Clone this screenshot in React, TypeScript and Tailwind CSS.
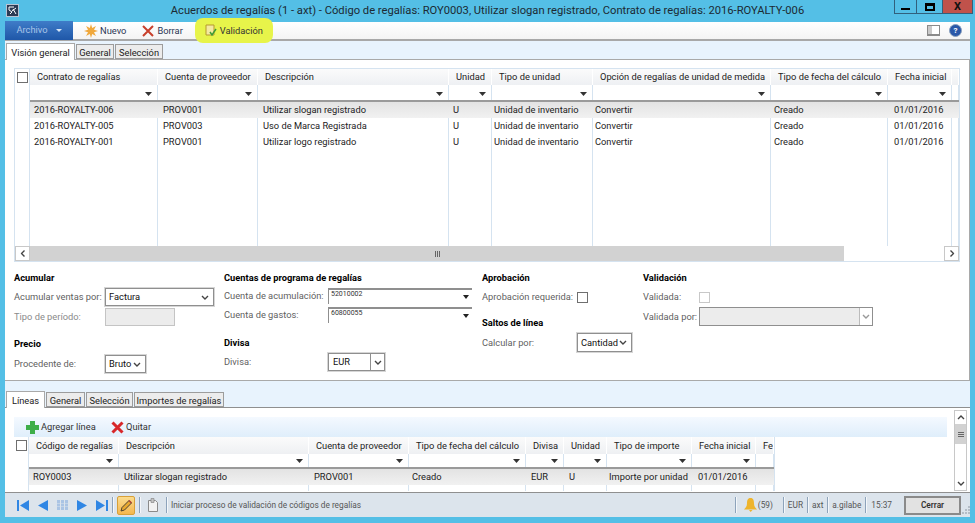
import React from 'react';

type Col = { label: string; w: string; pl: string; vp: string };

const topCols: Col[] = [
  { label: 'Contrato de regalías', w: 'w-[128px]', pl: 'pl-[7px]', vp: 'pl-[4px]' },
  { label: 'Cuenta de proveedor', w: 'w-[100px]', pl: 'pl-[7px]', vp: 'pl-[5px]' },
  { label: 'Descripción', w: 'w-[191px]', pl: 'pl-[7px]', vp: 'pl-[5px]' },
  { label: 'Unidad', w: 'w-[43px]', pl: 'pl-[7px]', vp: 'pl-[4px]' },
  { label: 'Tipo de unidad', w: 'w-[101px]', pl: 'pl-[7px]', vp: 'pl-[2px]' },
  { label: 'Opción de regalías de unidad de medida', w: 'w-[178px]', pl: 'pl-[7px]', vp: 'pl-[2px]' },
  { label: 'Tipo de fecha del cálculo', w: 'w-[117px]', pl: 'pl-[7px]', vp: 'pl-[3px]' },
  { label: 'Fecha inicial', w: 'w-[64px]', pl: 'pl-[7px]', vp: 'pl-[6px]' },
  { label: '', w: 'w-[7px]', pl: 'pl-0', vp: 'pl-0' },
];

const topRows = [
  ['2016-ROYALTY-006', 'PROV001', 'Utilizar slogan registrado', 'U', 'Unidad de inventario', 'Convertir', 'Creado', '01/01/2016', ''],
  ['2016-ROYALTY-005', 'PROV003', 'Uso de Marca Registrada', 'U', 'Unidad de inventario', 'Convertir', 'Creado', '01/01/2016', ''],
  ['2016-ROYALTY-001', 'PROV001', 'Utilizar logo registrado', 'U', 'Unidad de inventario', 'Convertir', 'Creado', '01/01/2016', ''],
];

const lineCols: Col[] = [
  { label: 'Código de regalías', w: 'w-[90px]', pl: 'pl-[7px]', vp: 'pl-[4px]' },
  { label: 'Descripción', w: 'w-[190px]', pl: 'pl-[7px]', vp: 'pl-[5px]' },
  { label: 'Cuenta de proveedor', w: 'w-[100px]', pl: 'pl-[7px]', vp: 'pl-[5px]' },
  { label: 'Tipo de fecha del cálculo', w: 'w-[117px]', pl: 'pl-[7px]', vp: 'pl-[3px]' },
  { label: 'Divisa', w: 'w-[38px]', pl: 'pl-[7px]', vp: 'pl-[5px]' },
  { label: 'Unidad', w: 'w-[43px]', pl: 'pl-[7px]', vp: 'pl-[5px]' },
  { label: 'Tipo de importe', w: 'w-[85px]', pl: 'pl-[7px]', vp: 'pl-[2px]' },
  { label: 'Fecha inicial', w: 'w-[64px]', pl: 'pl-[7px]', vp: 'pl-[6px]' },
  { label: 'Fe', w: 'w-[18px]', pl: 'pl-[7px]', vp: 'pl-0' },
];

const lineRow = ['ROY0003', 'Utilizar slogan registrado', 'PROV001', 'Creado', 'EUR', 'U', 'Importe por unidad', '01/01/2016', ''];

const Caret = () => (
  <svg width="7" height="4" viewBox="0 0 7 4" className="absolute right-[5px] bottom-[4px]">
    <path d="M0 0h7L3.500 4z" fill="#333" />
  </svg>
);

const Chevron = ({ color = '#444' }: { color?: string }) => (
  <svg width="8" height="5" viewBox="0 0 8 5">
    <path d="M1 1l3 3 3-3" fill="none" stroke={color} strokeWidth="1.400" />
  </svg>
);

const Check = ({ light }: { light?: boolean }) => (
  <div className={`w-[11px] h-[11px] bg-white border ${light ? 'border-[#c8c8c8]' : 'border-[#6f6f6f]'}`} />
);

const Grid = ({ cols, rows, blank, compact }: { cols: Col[]; rows: string[][]; blank: number; compact?: boolean }) => (
  <div className="flex">
    <div className="w-[15px] shrink-0 border-r border-[#d5e3f0]">
      <div className={`${compact ? 'h-[17px]' : 'h-[16px]'} flex items-center justify-center bg-white`}>
        <Check />
      </div>
    </div>
    <div>
      <div className={`flex ${compact ? 'h-[17px]' : 'h-[16px]'}`}>
        {cols.map((c) => (
          <div key={c.label} className={`${c.w} ${c.pl} shrink-0 overflow-hidden whitespace-nowrap border-r border-white bg-gradient-to-b from-[#fbfbfb] to-[#eef0f3] text-[#222] ${compact ? 'leading-[18px]' : 'leading-[16px]'}`}>
            {c.label}
          </div>
        ))}
      </div>
      <div className={`flex ${compact ? 'h-[15px]' : 'h-[17px]'} border-b-2 border-[#9a9a9a]`}>
        {cols.map((c) => (
          <div key={c.label} className={`${c.w} shrink-0 relative border-r border-[#d5e3f0] bg-white`}>
            {c.label !== 'Fe' && c.label !== '' && <Caret />}
          </div>
        ))}
      </div>
      {rows.map((r, i) => (
        <div key={i} className={`flex h-[16px] ${i === 0 ? 'bg-gradient-to-b from-[#e3e3e3] to-[#f1f1f1]' : 'bg-white'}`}>
          {r.map((v, j) => (
            <div key={j} className={`${cols[j].w} ${cols[j].vp} shrink-0 overflow-hidden whitespace-nowrap border-r ${i === 0 ? 'border-transparent' : 'border-[#d5e3f0]'} text-[#222] leading-[16px]`}>
              {v}
            </div>
          ))}
        </div>
      ))}
      <div className="flex" style={{ height: blank }}>
        {cols.map((c) => (
          <div key={c.label} className={`${c.w} shrink-0 border-r border-[#d5e3f0]`} />
        ))}
      </div>
    </div>
  </div>
);

const Tab = ({ label, active, w }: { label: string; active?: boolean; w: string }) => (
  <div
    className={`${w} text-center whitespace-nowrap ${
      active
        ? 'h-[17px] bg-white border border-b-0 border-[#a9a9a9] text-[#222] leading-[18px] relative z-10 -mb-px'
        : 'h-[15px] bg-[#ececec] border border-[#9c9c9c] text-[#222] leading-[15px]'
    }`}
  >
    {label}
  </div>
);

const Heading = ({ children, cls }: { children: React.ReactNode; cls?: string }) => (
  <div className={`font-bold text-black leading-[14px] h-[14px] ${cls ?? ''}`}>{children}</div>
);

const Field = ({ label, lw, h, cls, children, faded }: { label: string; lw: string; h: string; cls?: string; children: React.ReactNode; faded?: boolean }) => (
  <div className={`flex items-center ${h} ${cls ?? ''}`}>
    <div className={`${lw} shrink-0 whitespace-nowrap ${faded ? 'text-[#8a8a8a]' : 'text-[#5f5f5f]'}`}>{label}</div>
    {children}
  </div>
);

const Select = ({ w, value }: { w: string; value: string }) => (
  <div className={`${w} h-full flex items-center justify-between pl-[3px] pr-[4px] bg-white border border-[#8f8f8f] shadow-[0_0_0_1px_#d6d6d6] text-[#111]`}>
    <span>{value}</span>
    <Chevron />
  </div>
);

const Account = ({ value }: { value: string }) => (
  <div className="w-[144px] h-[16px] relative bg-white border-t-2 border-l border-[#8f8f8f] text-[7px] leading-[8px] pl-[2px] text-[#333]">
    {value}
    <svg width="6" height="4" viewBox="0 0 6 4" className="absolute right-[3px] top-[5px]">
      <path d="M0 0h6L3 4z" fill="#222" />
    </svg>
  </div>
);

const Grip = ({ vertical }: { vertical?: boolean }) => (
  <div className={`flex ${vertical ? 'flex-col' : ''} gap-px`}>
    {[0, 1, 2].map((i) => (
      <div key={i} className={vertical ? 'w-[6px] h-px bg-[#666]' : 'w-px h-[6px] bg-[#666]'} />
    ))}
  </div>
);

const NavBtn = ({ d }: { d: string }) => (
  <svg width="12" height="11" viewBox="0 0 12 11">
    <path d={d} fill="#2f86e4" />
  </svg>
);

const Sep = () => <div className="w-px h-[16px] bg-[#8da3bb] shadow-[1px_0_0_#f4f7fa]" />;

const App = () => {
  return (
    <div className="w-[975px] h-[523px] overflow-hidden bg-[#54bfe6] flex flex-col text-[9.300px] font-['Roboto',sans-serif]">
      {/* title bar */}
      <div className="h-[22px] shrink-0 relative flex items-center justify-center text-[11.200px] text-[#1c2a33]">
        <div className="absolute left-[6px] top-[4px] w-[13px] h-[13px] bg-[#2c3b55] border border-[#b8c4d4] flex items-center justify-center">
          <svg width="9" height="9" viewBox="0 0 9 9">
            <path d="M1 1h5M1 1v3l3 2-2 2M5 3l3 5M8 2L4 5" fill="none" stroke="#fff" strokeWidth="1" />
          </svg>
        </div>
        <span className="whitespace-nowrap">Acuerdos de regalías (1 - axt) - Código de regalías: ROY0003, Utilizar slogan registrado, Contrato de regalías: 2016-ROYALTY-006</span>
        <div className="absolute left-[894px] top-0 h-[14px] flex border border-t-0 border-[#31607c]">
          <div className="w-[22px] flex items-end justify-center pb-[3px] border-r border-[#31607c]">
            <div className="w-[9px] h-[2px] bg-black" />
          </div>
          <div className="w-[26px] flex items-center justify-center border-r border-[#31607c]">
            <div className="w-[10px] h-[8px] border-2 border-black border-t-[3px]" />
          </div>
          <div className="w-[29px] bg-[#c0524b] flex items-center justify-center text-[11px] font-bold text-[#111] leading-none">X</div>
        </div>
      </div>

      {/* ribbon */}
      <div className="mx-[5px] h-[19px] shrink-0 flex items-center bg-gradient-to-b from-white to-[#f4f4f4] border-b-2 border-[#a8a8a8] text-[#2b3654] relative z-20">
        <div className="w-[68px] h-[19px] -mt-px flex items-center justify-center gap-[8px] bg-gradient-to-b from-[#3f7cc8] to-[#1f57a8] text-[#a9c4e8]">
          Archivo
          <svg width="6" height="3" viewBox="0 0 6 3">
            <path d="M0 0h6L3 3z" fill="#d7e5f5" />
          </svg>
        </div>
        <div className="flex items-center gap-[2px] ml-[11px]">
          <svg width="14" height="14" viewBox="0 0 14 14">
            <path d="M7 0l1.200 4L12 2 10 5.800 14 7l-4 1.200L12 12 8.200 10 7 14l-1.200-4L2 12l2-3.800L0 7l4-1.200L2 2l3.800 2z" fill="#f0a83c" />
          </svg>
          <span>Nuevo</span>
        </div>
        <div className="flex items-center gap-[3px] ml-[16px]">
          <svg width="12" height="12" viewBox="0 0 12 12">
            <path d="M1 1l10 10M11 1L1 11" stroke="#c8402c" strokeWidth="2" />
          </svg>
          <span>Borrar</span>
        </div>
        <div className="w-[78px] flex items-center justify-center gap-[2px] ml-[12px] h-[25px] bg-[#e7f44a] rounded-[8px] text-[#333]">
          <svg width="13" height="13" viewBox="0 0 13 13">
            <path d="M1 1h8v10H1z" fill="#f4e9a0" stroke="#b59a2c" />
            <path d="M5 8l2 3 4-6" fill="none" stroke="#3c9b35" strokeWidth="1.500" />
          </svg>
          <span>Validación</span>
        </div>
        <div className="ml-auto flex items-center gap-[9px] pr-[8px]">
          <svg width="13" height="11" viewBox="0 0 13 11">
            <path d="M0 0h13v11H0z" fill="#8a8a8a" />
            <path d="M5 1h7v8H5z" fill="#fff" />
            <path d="M1 1h4v8H1z" fill="#c9c9c9" />
          </svg>
          <div className="w-[13px] h-[13px] rounded-full bg-[#2a58a8] border border-[#8aa0bd] text-white font-bold text-[8px] leading-[11px] text-center">?</div>
        </div>
      </div>

      {/* header tabs */}
      <div className="mx-[5px] shrink-0 h-[19px] pl-px flex items-end gap-px bg-[#e8f3fd] border-b border-[#a9a9a9]">
        <Tab label="Visión general" active w="w-[69px]" />
        <Tab label="General" w="w-[38px]" />
        <Tab label="Selección" w="w-[48px]" />
      </div>

      {/* header panel */}
      <div className="mx-[5px] h-[321px] shrink-0 bg-white border-b border-[#a9a9a9] border-r px-[9px] pt-[8px]">
        <div className="w-[946px] h-[194px] border border-[#d5e3f0] overflow-hidden">
          <Grid cols={topCols} rows={topRows} blank={96} />
          <div className="h-[15px] flex items-center bg-white">
            <div className="w-[15px] h-full flex items-center justify-center border border-[#c8c8c8]">
              <div className="rotate-90"><Chevron /></div>
            </div>
            <div className="w-[814px] h-full bg-[#d2d2d2] flex items-center justify-center">
              <Grip />
            </div>
            <div className="flex-1" />
            <div className="w-[15px] h-full flex items-center justify-center border border-[#c8c8c8]">
              <div className="-rotate-90"><Chevron /></div>
            </div>
          </div>
        </div>

        <div className="flex mt-[9px]">
          <div className="w-[210px]">
            <Heading>Acumular</Heading>
            <Field label="Acumular ventas por:" lw="w-[91px]" h="h-[18px]" cls="mt-[3px]">
              <Select w="w-[109px]" value="Factura" />
            </Field>
            <Field label="Tipo de período:" lw="w-[91px]" h="h-[18px]" cls="mt-[2px]" faded>
              <div className="w-[70px] h-full bg-[#ececec] border border-[#c4c4c4]" />
            </Field>
            <Heading cls="mt-[11px]">Precio</Heading>
            <Field label="Procedente de:" lw="w-[91px]" h="h-[18px]" cls="mt-[4px]">
              <Select w="w-[41px]" value="Bruto" />
            </Field>
          </div>
          <div className="w-[258px]">
            <Heading>Cuentas de programa de regalías</Heading>
            <Field label="Cuenta de acumulación:" lw="w-[104px]" h="h-[16px]" cls="mt-[3px]">
              <Account value="52010002" />
            </Field>
            <Field label="Cuenta de gastos:" lw="w-[104px]" h="h-[16px]" cls="mt-[3px]">
              <Account value="60800055" />
            </Field>
            <Heading cls="mt-[13px]">Divisa</Heading>
            <Field label="Divisa:" lw="w-[104px]" h="h-[18px]" cls="mt-[3px]">
              <div className="w-[57px] h-full flex items-center bg-white border border-[#8f8f8f] shadow-[0_0_0_1px_#d6d6d6] text-[#111]">
                <span className="flex-1 pl-[4px]">EUR</span>
                <div className="w-[14px] h-full flex items-center justify-center border-l border-[#8f8f8f]">
                  <Chevron />
                </div>
              </div>
            </Field>
          </div>
          <div className="w-[161px]">
            <Heading>Aprobación</Heading>
            <Field label="Aprobación requerida:" lw="w-[95px]" h="h-[14px]" cls="mt-[5px]">
              <Check />
            </Field>
            <Heading cls="mt-[12px]">Saltos de línea</Heading>
            <Field label="Calcular por:" lw="w-[95px]" h="h-[19px]" cls="mt-[3px]">
              <Select w="w-[55px]" value="Cantidad" />
            </Field>
          </div>
          <div className="w-[240px]">
            <Heading>Validación</Heading>
            <Field label="Validada:" lw="w-[56px]" h="h-[14px]" cls="mt-[5px]">
              <Check light />
            </Field>
            <Field label="Validada por:" lw="w-[56px]" h="h-[19px]" cls="mt-[3px]">
              <div className="w-[174px] h-full flex bg-[#ececec] border border-[#8f8f8f]">
                <div className="flex-1" />
                <div className="w-[13px] flex items-center justify-center bg-white border-l border-[#bbb]">
                  <Chevron color="#999" />
                </div>
              </div>
            </Field>
          </div>
        </div>
      </div>

      {/* lines tabs */}
      <div className="mx-[5px] shrink-0 h-[27px] pl-px flex items-end gap-px bg-[#e8f3fd] border-b border-[#8f8f8f]">
        <Tab label="Líneas" active w="w-[39px]" />
        <Tab label="General" w="w-[39px]" />
        <Tab label="Selección" w="w-[47px]" />
        <Tab label="Importes de regalías" w="w-[90px]" />
      </div>

      {/* lines panel */}
      <div className="mx-[5px] h-[85px] shrink-0 bg-white border-b border-[#8f8f8f] flex overflow-hidden">
        <div className="w-[948px] pl-[9px] pt-[9px] shrink-0">
          <div className="w-[933px] h-[20px] flex items-center pl-[12px] bg-gradient-to-b from-[#f4f9ff] to-[#dfeefb] text-[#333]">
            <svg width="13" height="13" viewBox="0 0 13 13">
              <path d="M4 0h5v4h4v5H9v4H4V9H0V4h4z" fill="#3fae49" />
            </svg>
            <span className="ml-[2px] w-[56px] whitespace-nowrap">Agregar línea</span>
            <svg width="13" height="13" viewBox="0 0 13 13" className="ml-[14px]">
              <path d="M1.500 1.500l10 10M11.500 1.500l-10 10" stroke="#d8272a" strokeWidth="3" />
            </svg>
            <span className="ml-[2px]">Quitar</span>
          </div>
          <div className="w-[761px] border-r border-[#d5e3f0]">
            <Grid cols={lineCols} rows={[lineRow]} blank={6} compact />
          </div>
        </div>
        <div className="w-[13px] h-[81px] mt-[2px] ml-[1px] border border-[#c8c8c8] flex flex-col items-center">
          <div className="h-[13px] flex items-center rotate-180">
            <Chevron />
          </div>
          <div className="w-full h-[20px] bg-[#d2d2d2] flex items-center justify-center">
            <Grip vertical />
          </div>
          <div className="h-[13px] mt-auto flex items-center">
            <Chevron />
          </div>
        </div>
      </div>

      {/* status bar */}
      <div className="mx-[5px] h-[24px] shrink-0 flex items-center bg-[#dce4ec] text-[8.300px] text-[#555] pl-[12px]">
        <div className="flex items-center gap-[8px]">
          <NavBtn d="M0 0h2v11H0zM12 0v11L3 5.500z" />
          <NavBtn d="M11 0v11L1 5.500z" />
          <svg width="11" height="10" viewBox="0 0 11 10">
            <path d="M0 0h3v3H0zM4 0h3v3H4zM8 0h3v3H8zM0 3.500h3v3H0zM4 3.500h3v3H4zM8 3.500h3v3H8zM0 7h3v3H0zM4 7h3v3H4zM8 7h3v3H8z" fill="#aac4e4" />
          </svg>
          <NavBtn d="M1 0v11l10-5.500z" />
          <NavBtn d="M0 0v11l9-5.500zM10 0h2v11h-2z" />
        </div>
        <div className="ml-[4px]"><Sep /></div>
        <div className="ml-[4px] w-[18px] h-[19px] flex items-center justify-center bg-gradient-to-b from-[#fbdc8e] to-[#f4b74e] border border-[#d8a038] rounded-[2px]">
          <svg width="13" height="13" viewBox="0 0 13 13">
            <path d="M1 12l1-3.500 7-7 2.500 2.500-7 7z" fill="#e8a830" stroke="#4a4030" strokeWidth="1" />
            <path d="M9 1.500L11.500 4" stroke="#b5473a" strokeWidth="1.500" />
          </svg>
        </div>
        <div className="ml-[4px]"><Sep /></div>
        <svg width="12" height="14" viewBox="0 0 12 14" className="ml-[7px]">
          <path d="M1.500 2.500h7l2 2v9h-9z" fill="#f2f2f2" stroke="#8a8a8a" />
          <path d="M4 .5h3v4H4z" fill="#c4c4c4" stroke="#8a8a8a" strokeWidth="0.700" />
        </svg>
        <div className="ml-[7px]"><Sep /></div>
        <span className="ml-[4px] whitespace-nowrap">Iniciar proceso de validación de códigos de regalías</span>
        <div className="ml-auto flex items-center">
          <Sep />
          <svg width="13" height="14" viewBox="0 0 13 14" className="ml-[8px]">
            <path d="M6.500 0C9.500 0 10 2.500 10 5.500c0 3 1.500 4 3 6H0c1.500-2 3-3 3-6C3 2.500 3.500 0 6.500 0zM5 12h3.500L6.700 14z" fill="#eeb42c" />
          </svg>
          <span className="ml-px w-[19px]">(59)</span>
          <div className="ml-[6px]"><Sep /></div>
          <span className="ml-[4px]">EUR</span>
          <div className="ml-[4px]"><Sep /></div>
          <span className="ml-[4px]">axt</span>
          <div className="ml-[4px]"><Sep /></div>
          <span className="ml-[4px]">a.gilabe</span>
          <div className="ml-[4px]"><Sep /></div>
          <span className="ml-[5px]">15:37</span>
          <div className="ml-[12px] w-[57px] h-[19px] flex items-center justify-center bg-[#e2e2e2] border-2 border-[#8a8a8a] font-semibold text-[#333]">Cerrar</div>
          <svg width="9" height="9" viewBox="0 0 9 9" className="self-end">
            <path d="M7 0h2v2H7zM4 3h2v2H4zM7 3h2v2H7zM1 6h2v2H1zM4 6h2v2H4zM7 6h2v2H7z" fill="#b4bdc7" />
          </svg>
        </div>
      </div>
    </div>
  );
};

export default App;
